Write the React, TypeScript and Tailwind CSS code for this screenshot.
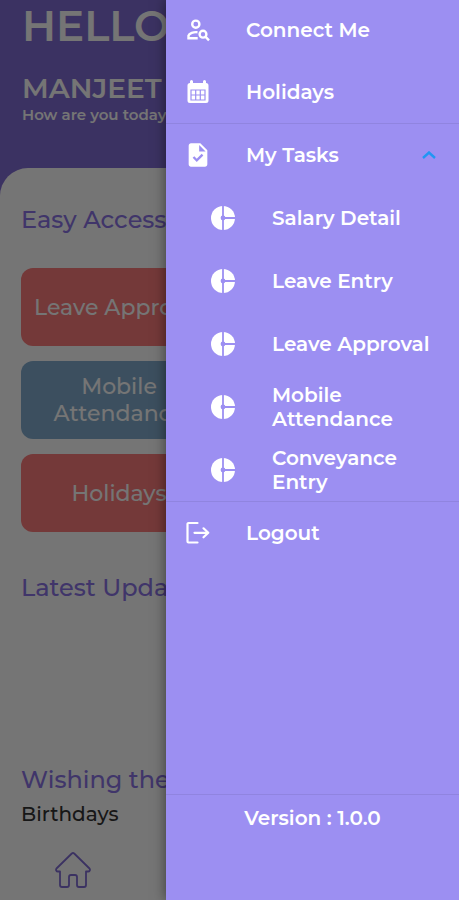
import type { ReactNode } from "react";
import { MdTask } from "react-icons/md";

const PersonSearchIcon = () => (
  <svg viewBox="0 0 28 28" className="size-7" fill="none" stroke="currentColor" strokeWidth="2.4" aria-hidden="true">
    <circle cx="11.800" cy="8.200" r="3.600" />
    <path d="M13.500 16.200c-4-.4-8.300 1-9 3.400v2.700h9.200" />
    <circle cx="19" cy="18.200" r="3.400" />
    <path d="M21.400 20.700l3.600 3.600" />
  </svg>
);

const DonutIcon = () => (
  <svg viewBox="0 0 28 28" className="size-7" fill="none" aria-hidden="true">
    <circle cx="14" cy="14" r="12" fill="currentColor" />
    <path stroke="#9c8ff2" strokeWidth="1.8" d="M14 1v26M14 14h13" />
    <circle cx="14" cy="14" r="2.400" fill="#9c8ff2" />
  </svg>
);

const CalendarIcon = () => (
  <svg viewBox="0 0 24 24" className="size-6" fill="none" aria-hidden="true">
    <path
      fill="currentColor"
      d="M4 1.500a1.500 1.500 0 0 1 3 0V3h10V1.500a1.500 1.500 0 0 1 3 0V3a2.500 2.500 0 0 1 2.500 2.500v15A2.500 2.500 0 0 1 20 23H4a2.500 2.500 0 0 1-2.500-2.500v-15A2.500 2.500 0 0 1 4 3z"
    />
    <path stroke="#9c8ff2" strokeWidth="1.2" d="M5 10h14v10H5zM9.700 10v10M14.300 10v10M5 15h14" />
  </svg>
);

const LogoutIcon = () => (
  <svg
    viewBox="0 0 24 24"
    className="size-6"
    fill="none"
    stroke="currentColor"
    strokeWidth="2.2"
    strokeLinecap="round"
    strokeLinejoin="round"
    aria-hidden="true"
  >
    <path d="M11.500 2H2.500a1 1 0 0 0-1 1v17.500a1 1 0 0 0 1 1h9M8.500 11.800h13.500M17.500 7.300l4.800 4.500-4.800 4.500" />
  </svg>
);

const HomeIcon = () => (
  <svg
    viewBox="0 0 36 36"
    className="size-9"
    fill="none"
    stroke="currentColor"
    strokeWidth="1.8"
    strokeLinejoin="round"
    aria-hidden="true"
  >
    <path d="M16.800 1.500 1.500 16.500c-1 1.300-.2 3 1.500 3h2V33q0 2 2 2h5q2 0 2-2v-8q0-2 2-2h4q2 0 2 2v8q0 2 2 2h5q2 0 2-2V19.500h2c1.700 0 2.500-1.700 1.500-3L19.200 1.500q-1.200-1-2.400 0z" />
  </svg>
);

const ChevronUp = () => (
  <svg viewBox="0 0 14 8" className="h-2 w-3.5" fill="none" stroke="#2196f3" strokeWidth="2.4" aria-hidden="true">
    <path d="M1 7l6-5.500L13 7" />
  </svg>
);

const tasks = ["Salary Detail", "Leave Entry", "Leave Approval", "Mobile Attendance", "Conveyance Entry"];

const shortcuts = [
  { label: "Leave Approval", color: "bg-[#fc7c7c]" },
  { label: "Mobile Attendance", color: "bg-[#84adcf]" },
  { label: "Holidays", color: "bg-[#fc7c7c]" },
];

const MenuItem = ({ icon, label, trailing }: { icon: ReactNode; label: string; trailing?: ReactNode }) => (
  <button type="button" className="flex h-[62px] w-full items-center pl-[18px] pr-[23px] text-left">
    <span className="mr-[34px] flex size-7 shrink-0 items-center justify-center">{icon}</span>
    <span className="flex-1">{label}</span>
    {trailing}
  </button>
);

const HomeScreen = () => (
  <div className="flex min-h-screen flex-col bg-[#826dd5]">
    <header className="h-[168px] px-[22px] pt-1 text-white">
      <h1 className="text-[42px] font-semibold leading-[44px]">HELLO</h1>
      <p className="mt-6 text-[28px] font-semibold leading-8">MANJEET</p>
      <p className="mt-px text-[15px] font-semibold leading-5">How are you today</p>
    </header>

    <main className="flex flex-1 flex-col rounded-t-[28px] bg-white px-[21px] pt-9">
      <h2 className="text-2xl font-medium leading-8 text-[#8b74e6]">Easy Access</h2>
      <div className="mt-8 flex flex-col gap-[15px]">
        {shortcuts.map((item) => (
          <button
            key={item.label}
            type="button"
            className={`flex h-[78px] w-[47%] items-center justify-center rounded-xl px-2 text-[22px] font-medium leading-[27px] text-white ${item.color}`}
          >
            {item.label}
          </button>
        ))}
      </div>
      <h2 className="mt-10 text-2xl font-medium leading-8 text-[#8b74e6]">Latest Updates</h2>
      <h2 className="mt-auto text-2xl font-medium leading-8 text-[#8b74e6]">Wishing the</h2>
      <p className="mt-0.5 text-xl font-medium leading-8 text-[#333333]">Birthdays</p>
      <nav className="mb-3 mt-[22px] flex px-[34px] text-[#826dd5]">
        <a href="#home" aria-label="Home">
          <HomeIcon />
        </a>
      </nav>
    </main>
  </div>
);

const Drawer = () => (
  <aside className="absolute inset-y-0 right-0 flex w-[293px] flex-col bg-[#9c8ff2] text-xl font-semibold leading-6 text-white shadow-[0_0_12px_rgba(0,0,0,0.5)]">
    <div className="-mt-px">
      <MenuItem icon={<PersonSearchIcon />} label="Connect Me" />
      <MenuItem icon={<CalendarIcon />} label="Holidays" />
    </div>
    <div className="border-t border-[#9084e0]">
      <MenuItem icon={<MdTask className="size-7" />} label="My Tasks" trailing={<ChevronUp />} />
      <ul>
        {tasks.map((task) => (
          <li key={task}>
            <button type="button" className="flex h-[63px] w-full items-center pl-[43px] pr-6 text-left">
              <span className="mr-[35px] flex size-7 shrink-0 items-center justify-center">
                <DonutIcon />
              </span>
              <span>{task}</span>
            </button>
          </li>
        ))}
      </ul>
    </div>
    <div className="border-t border-[#9084e0]">
      <MenuItem icon={<LogoutIcon />} label="Logout" />
    </div>
    <footer className="mt-auto h-[106px] border-t border-[#9084e0] pt-[11px] text-center">Version : 1.0.0</footer>
  </aside>
);

export default function App() {
  return (
    <div className="relative overflow-hidden font-['Montserrat','Inter',sans-serif]">
      <HomeScreen />
      <div className="absolute inset-0 bg-black/54" />
      <Drawer />
    </div>
  );
}
